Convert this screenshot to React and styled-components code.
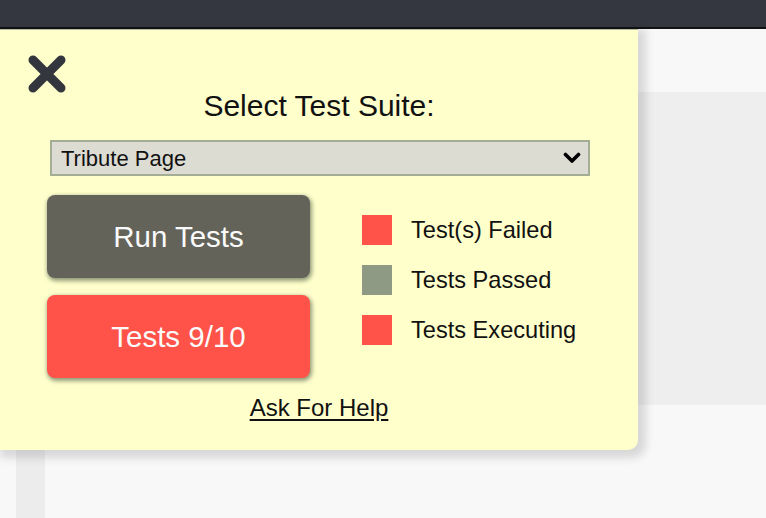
import React from 'react'
import styled, { createGlobalStyle } from 'styled-components'

const GlobalStyle = createGlobalStyle`
  html, body { margin: 0; padding: 0; }
  body {
    font-family: "Liberation Sans", Arial, Helvetica, sans-serif;
    background: #f8f8f8;
  }
`

const Page = styled.div`
  position: relative;
  min-height: 100vh;
  overflow: hidden;
  background: #f8f8f8;
`

const TopBar = styled.div`
  height: 27px;
  background: #343740;
  border-bottom: 2px solid #111214;
`

const Backdrop = styled.div`
  display: flex;
  align-items: flex-start;
  padding: 63px 0 0 16px;
  min-height: 426px;
`

const Strip = styled.div`
  width: 29px;
  align-self: stretch;
  background: #ececec;
`

const Block = styled.div`
  flex: 1;
  height: 313px;
  background: #eeeeee;
`

const Panel = styled.div`
  position: absolute;
  top: 29px;
  left: 0;
  width: 638px;
  box-sizing: border-box;
  padding: 59px 0 28px;
  background: #ffffcc;
  border-top: 1px solid #b4bc9e;
  border-bottom-right-radius: 10px;
  box-shadow: 4px 4px 8px 4px rgba(0, 0, 0, 0.13);
  display: flex;
  flex-direction: column;
  align-items: center;
`

const Close = styled.button`
  position: absolute;
  top: 25px;
  left: 28px;
  width: 38px;
  height: 38px;
  padding: 0;
  border: 0;
  background: none;
  cursor: pointer;
  svg { display: block; }
`

const Title = styled.h2`
  margin: 0;
  font-size: 30px;
  line-height: 34px;
  font-weight: 400;
  color: #111;
`

const SelectWrap = styled.div`
  position: relative;
  width: 540px;
  margin-top: 17px;
  margin-left: 2px;
`

const Select = styled.select`
  appearance: none;
  width: 100%;
  height: 36px;
  box-sizing: border-box;
  padding: 0 30px 0 9px;
  border: 2px solid #a3ae94;
  border-radius: 0;
  background: #dcdcd3;
  font-family: inherit;
  font-size: 22px;
  color: #111;
`

const Chevron = styled.svg`
  position: absolute;
  right: 9px;
  top: 12px;
  pointer-events: none;
`

const Row = styled.div`
  display: flex;
  align-self: flex-start;
  gap: 52px;
  margin: 19px 0 0 47px;
`

const Buttons = styled.div`
  display: flex;
  flex-direction: column;
  gap: 17px;
`

const Button = styled.button`
  width: 263px;
  height: 83px;
  border: 0;
  border-radius: 8px;
  background: ${({ $tone }) => ($tone === 'red' ? '#ff5349' : '#63635a')};
  color: #fafafa;
  font-family: inherit;
  font-size: 29.5px;
  box-shadow: 1px 2px 4px 1px rgba(110, 122, 92, 0.75);
  cursor: pointer;
`

const Legend = styled.ul`
  list-style: none;
  margin: 20px 0 0;
  padding: 0;
  display: flex;
  flex-direction: column;
  gap: 20px;
`

const Item = styled.li`
  display: flex;
  align-items: center;
  gap: 19px;
  height: 30px;
  font-size: 23.6px;
  color: #111;
`

const Swatch = styled.span`
  width: 30px;
  height: 30px;
  background: ${({ $color }) => $color};
`

const Help = styled.a`
  margin-top: 16px;
  font-size: 24px;
  line-height: 28px;
  color: #111;
  text-decoration: underline;
  text-underline-offset: 3px;
`

const legend = [
  { label: 'Test(s) Failed', color: '#ff5349' },
  { label: 'Tests Passed', color: '#8f9a84' },
  { label: 'Tests Executing', color: '#ff5349' },
]

export default function App() {
  return (
    <Page>
      <GlobalStyle />
      <TopBar />
      <Backdrop>
        <Strip />
        <Block />
      </Backdrop>
      <Panel>
        <Close aria-label="Close">
          <svg width="38" height="38" viewBox="0 0 38 38">
            <path d="M5 5 L33 33 M33 5 L5 33" stroke="#33363d" strokeWidth="9" strokeLinecap="round" fill="none" />
          </svg>
        </Close>
        <Title>Select Test Suite:</Title>
        <SelectWrap>
          <Select defaultValue="tribute">
            <option value="tribute">Tribute Page</option>
            <option value="survey">Survey Form</option>
            <option value="landing">Product Landing Page</option>
          </Select>
          <Chevron width="18" height="12" viewBox="0 0 18 12">
            <path d="M2.5 2.5 L9 9 L15.5 2.5" stroke="#000" strokeWidth="3.6" fill="none" strokeLinecap="round" strokeLinejoin="round" />
          </Chevron>
        </SelectWrap>
        <Row>
          <Buttons>
            <Button>Run Tests</Button>
            <Button $tone="red">Tests 9/10</Button>
          </Buttons>
          <Legend>
            {legend.map((l) => (
              <Item key={l.label}>
                <Swatch $color={l.color} />
                {l.label}
              </Item>
            ))}
          </Legend>
        </Row>
        <Help href="#">Ask For Help</Help>
      </Panel>
    </Page>
  )
}
